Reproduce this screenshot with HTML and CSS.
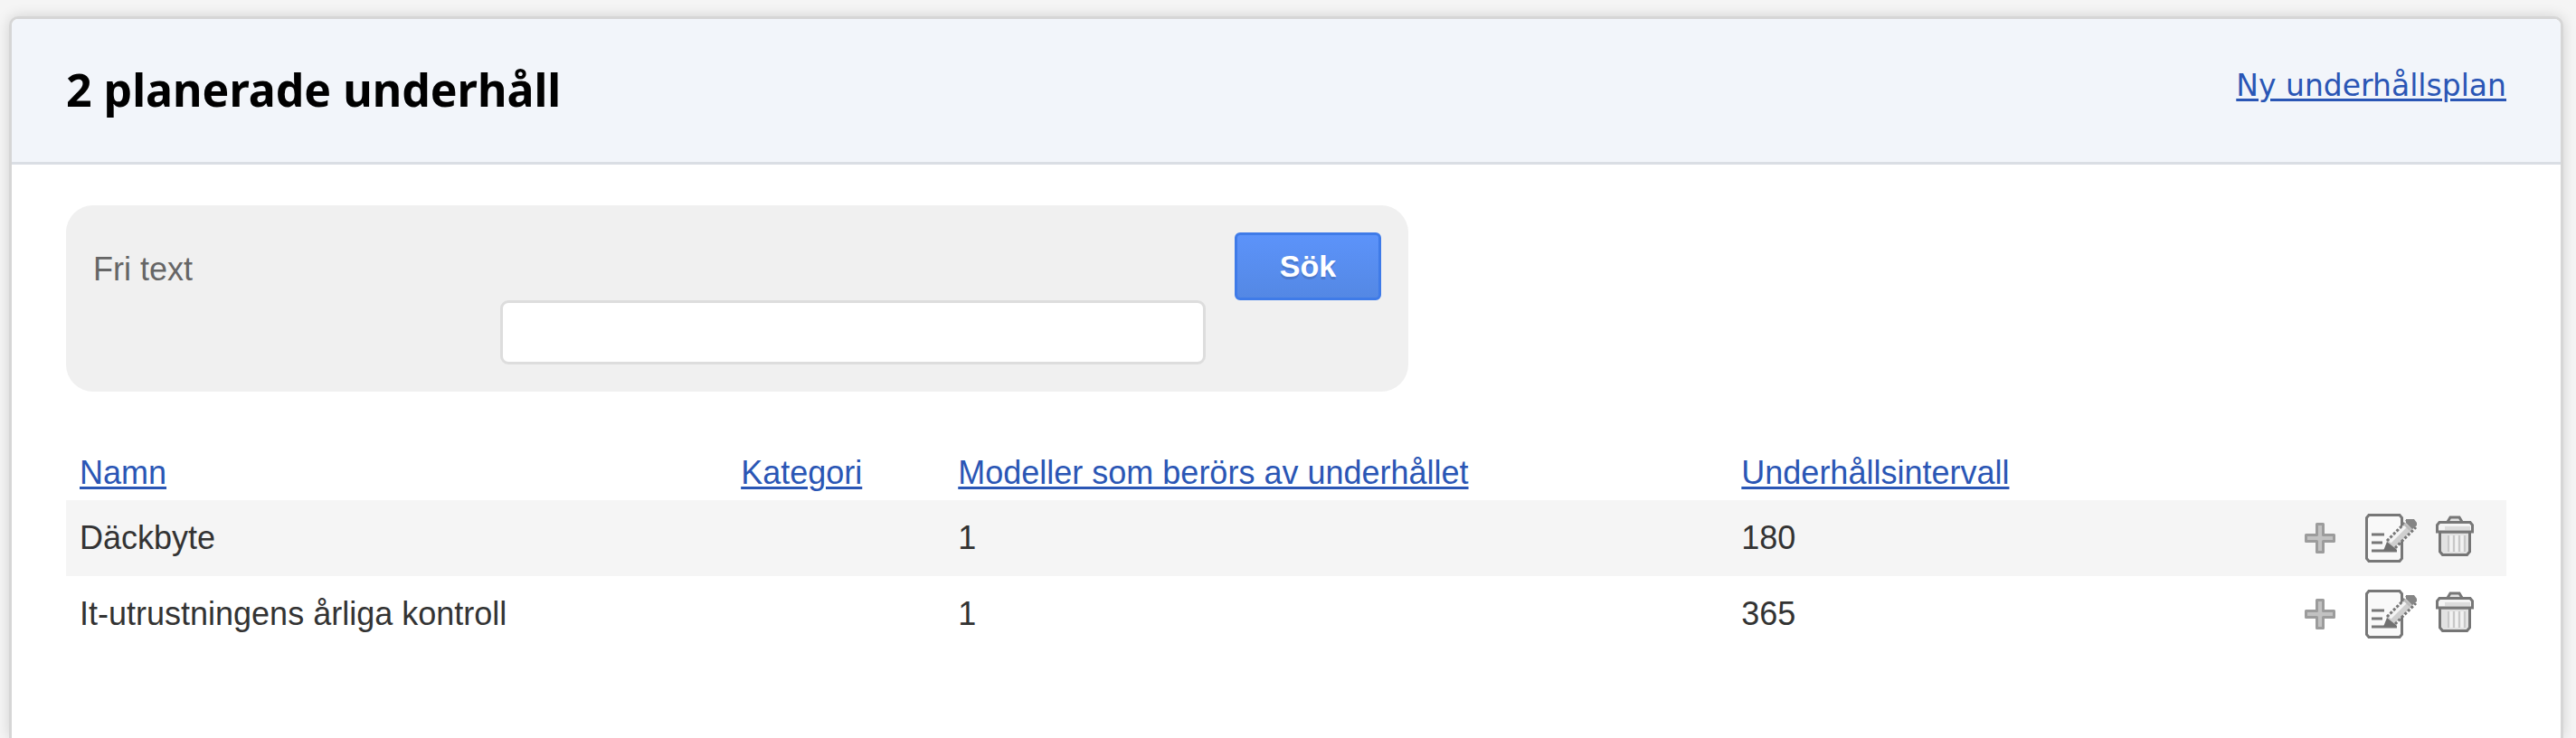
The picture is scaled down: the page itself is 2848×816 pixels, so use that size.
FILE: index.html
```html
<!DOCTYPE html>
<html lang="sv">
<head>
  <meta charset="UTF-8">
  <meta name="viewport" content="width=device-width, initial-scale=1.0">
  <title>Planerade underhåll</title>
  <link rel="stylesheet" href="styles.css">
</head>
<body>
  <!-- icons shared by the table rows -->
  <svg class="sprite" aria-hidden="true">
    <symbol id="icon-plus" viewBox="0 0 34 34">
      <path d="M13.500 1.500h7v12h12v7h-12v12h-7v-12h-12v-7h12z" fill="#c2c2c2" stroke="#9c9c9c" stroke-width="3" stroke-linejoin="round"/>
    </symbol>
    <symbol id="icon-edit" viewBox="0 0 58 54">
      <path d="M4 1.500h34l2.500 3v45l-2.500 3H4l-2.500-3v-45z" fill="#f9f9f9" stroke="#777" stroke-width="3"/>
      <path d="M7 23h14M7 32h12M7 41h28" stroke="#777" stroke-width="3"/>
      <path d="M23 31L46 9l8 7-22 22z" fill="#cfcfcf"/>
      <path d="M27 31L46 12" stroke="#f4f4f4" stroke-width="4"/>
      <path d="M24 30L46 8" stroke="#777" stroke-width="3" stroke-dasharray="3 2"/>
      <path d="M33 38L56 15" stroke="#777" stroke-width="3" stroke-dasharray="3 2"/>
      <path d="M20 41l4-10 10 8v2z" fill="#707070"/>
      <path d="M45 6h9l3 4v3l-5 4-7-7z" fill="#858585"/>
      <path d="M44 10l7 7-2 2-7-7z" fill="#bbb"/>
    </symbol>
    <symbol id="icon-trash" viewBox="0 0 42 50">
      <path d="M13 7l3-5h10l3 5" fill="#e4e4e4" stroke="#777" stroke-width="3"/>
      <path d="M4.500 18v22l3 3.500h27l3-3.500V18z" fill="#e2e2e2" stroke="#757575" stroke-width="3"/>
      <path d="M14 22v18M20 22v18M26 22v18M32 22v18" stroke="#c8c8c8" stroke-width="2"/>
      <path d="M17 22v18M23 22v18M29 22v18" stroke="#f2f2f2" stroke-width="3"/>
      <path d="M4 7.500h34l2.500 3V18h-39v-7.500z" fill="#f4f4f4" stroke="#777" stroke-width="3"/>
      <path d="M10 14h28" stroke="#dcdcdc" stroke-width="4"/>
    </symbol>
  </svg>

  <div class="panel">
    <header class="panel-header">
      <h1>2 planerade underhåll</h1>
      <a class="new-plan" href="#">Ny underhållsplan</a>
    </header>
    <main class="content">
      <form class="search">
        <label for="free-text">Fri text</label>
        <input type="text" id="free-text" name="q">
        <button type="submit">Sök</button>
      </form>

      <table class="plans">
        <colgroup>
          <col class="col-name">
          <col class="col-category">
          <col class="col-models">
          <col class="col-interval">
          <col class="col-actions">
        </colgroup>
        <thead>
          <tr>
            <th><a href="#">Namn</a></th>
            <th><a href="#">Kategori</a></th>
            <th><a href="#">Modeller som berörs av underhållet</a></th>
            <th><a href="#">Underhållsintervall</a></th>
            <th></th>
          </tr>
        </thead>
        <tbody>
          <tr>
            <td>Däckbyte</td>
            <td></td>
            <td>1</td>
            <td>180</td>
            <td>
              <div class="actions">
                <a class="add" href="#" aria-label="Lägg till"><svg class="plus"><use href="#icon-plus"/></svg></a>
                <a href="#" aria-label="Redigera"><svg class="edit"><use href="#icon-edit"/></svg></a>
                <a href="#" aria-label="Ta bort"><svg class="trash"><use href="#icon-trash"/></svg></a>
              </div>
            </td>
          </tr>
          <tr>
            <td>It-utrustningens årliga kontroll</td>
            <td></td>
            <td>1</td>
            <td>365</td>
            <td>
              <div class="actions">
                <a class="add" href="#" aria-label="Lägg till"><svg class="plus"><use href="#icon-plus"/></svg></a>
                <a href="#" aria-label="Redigera"><svg class="edit"><use href="#icon-edit"/></svg></a>
                <a href="#" aria-label="Ta bort"><svg class="trash"><use href="#icon-trash"/></svg></a>
              </div>
            </td>
          </tr>
        </tbody>
      </table>
    </main>
  </div>
</body>
</html>
```
FILE: styles.css
```css
* {
  box-sizing: border-box;
}

html {
  height: 100%;
}

body {
  display: flex;
  height: 100%;
  margin: 0;
  padding: 18px 14px 0 10px;
  overflow: hidden;
  background: #f5f5f5;
  color: #333;
  font-family: Helvetica, "Liberation Sans", Arial, sans-serif;
  font-size: 36px;
  line-height: 42px;
}

a {
  color: #2a56b5;
  text-decoration-thickness: 3px;
  text-underline-offset: 3px;
}

.sprite {
  position: absolute;
  width: 0;
  height: 0;
}

.panel {
  flex: 1;
  border: 3px solid #d6d6d6;
  border-bottom: 0;
  border-radius: 10px 10px 0 0;
  background: #fff;
  box-shadow: 0 0 15px rgba(0, 0, 0, .15);
}

.panel-header {
  display: flex;
  justify-content: space-between;
  padding: 51px 60px 53px;
  border-bottom: 3px solid #dadee4;
  border-radius: 7px 7px 0 0;
  background: #f2f5fa;
}

h1 {
  margin: 0;
  color: #000;
  font-family: "Lucida Grande", "Noto Sans", sans-serif;
  font-size: 50px;
  line-height: 54px;
}

.new-plan {
  font-family: Verdana, "DejaVu Sans", sans-serif;
  font-size: 33px;
  line-height: 46px;
}

.content {
  padding: 45px 60px 0;
}

.search {
  display: grid;
  grid-template-columns: 450px 780px 194px;
  grid-template-rows: 75px 71px;
  width: fit-content;
  padding: 30px;
  border-radius: 30px;
  background: #f0f0f0;
}

.search label {
  padding-top: 20px;
  color: #666;
}

.search input {
  grid-row: 2;
  grid-column: 2;
  width: 100%;
  padding: 0 12px;
  border: 3px solid #ddd;
  border-radius: 9px;
  font: inherit;
}

.search button {
  grid-row: 1;
  grid-column: 3;
  margin-left: 32px;
  padding: 0 0 2px;
  border: 3px solid #3f7be8;
  border-radius: 6px;
  background: linear-gradient(#5c93fa, #5488e4);
  color: #fff;
  font: inherit;
  font-size: 34px;
  font-weight: bold;
  text-shadow: 0 3px 0 rgba(0, 0, 0, .15);
}

.plans {
  width: 100%;
  margin-top: 60px;
  border-collapse: collapse;
  table-layout: fixed;
}

.plans th,
.plans td {
  padding: 0 15px;
  text-align: left;
  font-weight: normal;
}

.plans th {
  height: 60px;
}

.plans td {
  height: 84px;
}

.plans tbody tr:nth-child(odd) {
  background: #f5f5f5;
}

.col-name { width: 27.1%; }
.col-category { width: 8.9%; }
.col-models { width: 32.1%; }
.col-interval { width: 22.4%; }
.col-actions { width: 9.5%; }

.actions {
  display: flex;
  align-items: center;
  justify-content: flex-end;
  gap: 20px;
  padding-right: 21px;
}

.actions a,
.actions svg {
  display: block;
}

.actions .add {
  margin-right: 13px;
}

.plus { width: 34px; height: 34px; }
.edit { width: 58px; height: 54px; }
.trash { width: 42px; height: 50px; }
```
